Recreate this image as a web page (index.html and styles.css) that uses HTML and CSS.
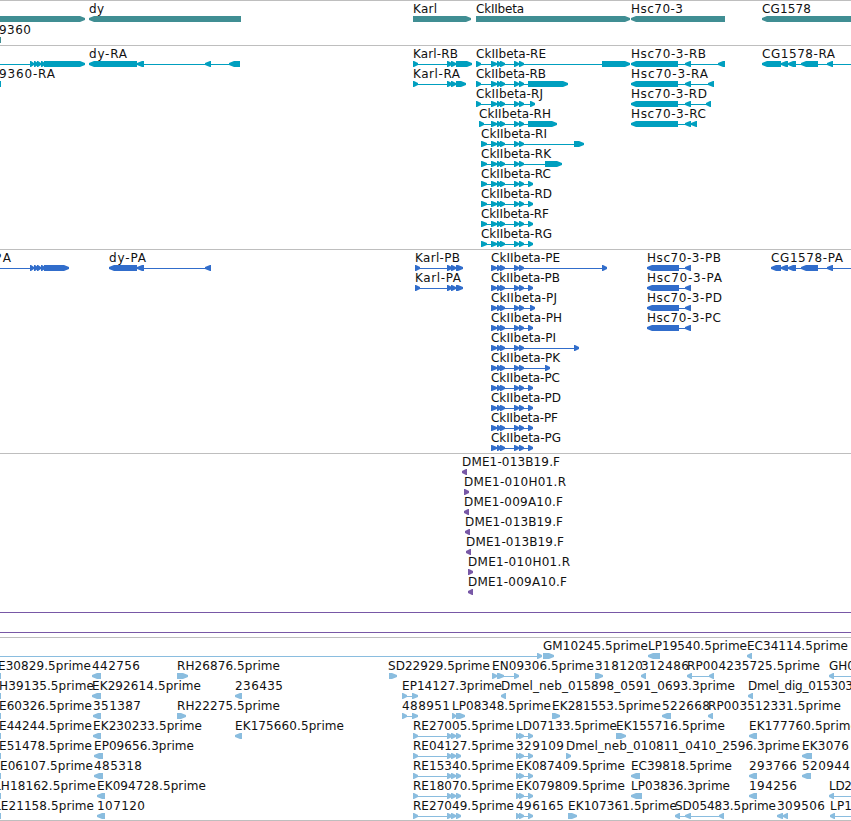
FILE: index.html
```html
<!DOCTYPE html>
<html lang="en">
<head>
    <meta charset="UTF-8">
    <meta name="viewport" content="width=device-width, initial-scale=1.0">
    <title>Genome Browser</title>
    <link rel="stylesheet" href="styles.css">
</head>
<body>
    <main class="browser">
        <section class="track track-genes"><svg id="genes"></svg></section>
        <section class="track track-mrna"><svg id="mrna"></svg></section>
        <section class="track track-protein"><svg id="protein"></svg></section>
        <section class="track track-clones"><svg id="clones"></svg></section>
        <section class="track track-est"><svg id="est"></svg></section>
    </main>
    <script src="tracks.js"></script>
</body>
</html>
```

FILE: styles.css
```css
* {
    margin: 0;
    padding: 0;
    box-sizing: border-box;
}

body {
    background-color: #ffffff;
    overflow: hidden;
}

.browser {
    width: 851px;
    display: flex;
    flex-direction: column;
}

.track {
    border-top: 1px solid #bebebe;
    overflow: hidden;
}

.track svg {
    display: block;
    width: 100%;
    height: 100%;
}

.track-genes {
    height: 45px;
    color: #408e93;
}

.track-mrna {
    height: 204px;
    color: #009fbf;
}

.track-protein {
    height: 204px;
    color: #316dcb;
}

.track-clones {
    height: 184px;
    color: #7858a6;
}

.track-est {
    height: 184px;
    border-bottom: 1px solid #bebebe;
    color: #8abddf;
}

.label {
    font-family: "DejaVu Sans", sans-serif;
    font-size: 12px;
    fill: #111111;
}

.exon,
.intron {
    fill: currentColor;
}

.intron {
    shape-rendering: crispEdges;
}
```

FILE: tracks.js
```js
var NS = 'http://www.w3.org/2000/svg';

function add(svg, tag, cls, attrs, text) {
    var el = document.createElementNS(NS, tag);
    el.setAttribute('class', cls);
    for (var key in attrs) el.setAttribute(key, attrs[key]);
    if (text) el.textContent = text;
    svg.appendChild(el);
}

// exon block, pointed on the side of its strand
function exon(svg, a, b, y, dir) {
    var t = Math.min(b - a, 6);
    var m = y + 3;
    var points;
    if (dir === '>') {
        points = [a, y, b - t + 1, y, b, m - 1, b, m + 1, b - t + 1, y + 6, a, y + 6];
    } else if (dir === '<') {
        points = [b, y, a + t - 1, y, a, m - 1, a, m + 1, a + t - 1, y + 6, b, y + 6];
    } else {
        points = [a, y, b, y, b, y + 6, a, y + 6];
    }
    add(svg, 'polygon', 'exon', { points: points.join(' ') });
}

// feature: [row, label, x, label width, strand, exons, line end]
function draw(id, pitch, features) {
    var svg = document.getElementById(id);
    features.forEach(function (f) {
        var y = 15 + f[0] * pitch;
        var exons = f[5].split(' ').map(function (s) {
            return s.split('-').map(Number);
        });
        var start = f[6] === 'from0' ? 0 : exons[0][0];
        var end = typeof f[6] === 'number' ? f[6] : exons[exons.length - 1][1];
        // a lone exon has no intron line
        if (exons.length > 1 || f[6]) {
            add(svg, 'rect', 'intron', { x: start, y: y + 3, width: end - start, height: 1 });
        }
        exons.forEach(function (e) {
            exon(svg, e[0], e[1], y, f[4]);
        });
        if (f[1]) {
            add(svg, 'text', 'label', { x: f[2], y: y - 3, textLength: f[3] }, f[1]);
        }
    });
}

var CK = '491-497 497-501 500-505 514-519 519-524 ';
var KARL = '413-418 447-452 451-456 ';
var RE = KARL + '456-461';
var LD = '516-520 519-524 528-533';
var CG = '781-788 788-796 801-818 827-833';

draw('genes', 21, [
    [0, '', 0, 0, '>', '0-85'],
    [1, '9360', -1, 32, '|', '0-1'],
    [0, 'dy', 89, 15, '<', '89-241'],
    [0, 'Karl', 413, 24, '>', '413-471'],
    [0, 'CkIIbeta', 476, 48, '>', '476-630'],
    [0, 'Hsc70-3', 631, 52, '<', '631-725'],
    [0, 'CG1578', 762, 49, '<', '762-860']
]);

draw('mrna', 20, [
    [0, '', 0, 0, '>', '30-34 34-38 37-41 41-45 44-85', 'from0'],
    [1, '9360-RA', -1, 56, '|', '0-1'],
    [0, 'dy-RA', 89, 38, '<', '89-137 137-144 205-211 229-240'],
    [0, 'Karl-RB', 413, 45, '>', KARL + '456-472'],
    [1, 'Karl-RA', 413, 47, '>', KARL + '456-466'],
    [0, 'CkIIbeta-RE', 476, 70, '>', '476-481 ' + CK + '602-630'],
    [1, 'CkIIbeta-RB', 476, 70, '>', '476-481 ' + CK + '528-568'],
    [2, 'CkIIbeta-RJ', 476, 67, '>', '476-481 ' + CK + '530-535'],
    [3, 'CkIIbeta-RH', 479, 72, '>', '479-484 ' + CK + '528-557'],
    [4, 'CkIIbeta-RI', 481, 66, '>', '481-487 ' + CK + '574-584'],
    [5, 'CkIIbeta-RK', 481, 70, '>', '481-487 ' + CK + '545-562'],
    [6, 'CkIIbeta-RC', 481, 70, '>', '481-487 ' + CK + '528-533'],
    [7, 'CkIIbeta-RD', 481, 71, '>', '481-487 ' + CK + '528-533'],
    [8, 'CkIIbeta-RF', 481, 68, '>', '481-487 ' + CK + '528-533'],
    [9, 'CkIIbeta-RG', 481, 71, '>', '481-487 ' + CK + '528-533'],
    [0, 'Hsc70-3-RB', 631, 75, '<', '631-678 685-691 718-725'],
    [1, 'Hsc70-3-RA', 631, 77, '<', '631-678 685-691 708-714'],
    [2, 'Hsc70-3-RD', 631, 76, '<', '631-678 685-691 706-711'],
    [3, 'Hsc70-3-RC', 631, 75, '<', '631-678 685-691 691-697'],
    [0, 'CG1578-RA', 762, 73, '<', '762-781 ' + CG, 860]
]);

draw('protein', 20, [
    [0, 'PA', -6, 17, '>', '30-34 34-38 37-41 41-45 44-69', 'from0'],
    [0, 'dy-PA', 109, 37, '<', '109-137 137-144 205-211'],
    [0, 'Karl-PB', 415, 45, '>', '415-420 447-452 451-456 456-463'],
    [1, 'Karl-PA', 415, 46, '>', '415-420 447-452 451-456 456-463'],
    [0, 'CkIIbeta-PE', 491, 69, '>', CK + '602-607'],
    [1, 'CkIIbeta-PB', 491, 69, '>', CK + '528-533'],
    [2, 'CkIIbeta-PJ', 491, 66, '>', CK + '530-535'],
    [3, 'CkIIbeta-PH', 491, 71, '>', CK + '528-533'],
    [4, 'CkIIbeta-PI', 491, 65, '>', CK + '574-579'],
    [5, 'CkIIbeta-PK', 491, 69, '>', CK + '545-550'],
    [6, 'CkIIbeta-PC', 491, 69, '>', CK + '528-533'],
    [7, 'CkIIbeta-PD', 491, 70, '>', CK + '528-533'],
    [8, 'CkIIbeta-PF', 491, 67, '>', CK + '528-533'],
    [9, 'CkIIbeta-PG', 491, 70, '>', CK + '528-533'],
    [0, 'Hsc70-3-PB', 647, 74, '<', '647-679 685-691'],
    [1, 'Hsc70-3-PA', 647, 75, '<', '647-679 685-691'],
    [2, 'Hsc70-3-PD', 647, 75, '<', '647-679 685-691'],
    [3, 'Hsc70-3-PC', 647, 74, '<', '647-679 685-691'],
    [0, 'CG1578-PA', 771, 72, '<', '771-781 ' + CG, 860]
]);

draw('clones', 20, [
    [0, 'DME1-013B19.F', 462, 98, '<', '462-467'],
    [1, 'DME1-010H01.R', 464, 102, '>', '464-469'],
    [2, 'DME1-009A10.F', 464, 99, '<', '464-469'],
    [3, 'DME1-013B19.F', 465, 98, '<', '465-470'],
    [4, 'DME1-013B19.F', 466, 98, '<', '466-471'],
    [5, 'DME1-010H01.R', 468, 102, '>', '468-473'],
    [6, 'DME1-009A10.F', 468, 99, '<', '468-473']
]);

// matches that span the whole view
[158, 178].forEach(function (y) {
    add(document.getElementById('clones'), 'rect', 'intron', { x: 0, y: y, width: 851, height: 1 });
});

draw('est', 20, [
    [0, '', 0, 0, '>', '537-542', 'from0'],
    [0, 'GM10245.5prime', 543, 105, '>', '543-554'],
    [0, 'LP19540.5prime', 648, 99, '<', '648-660'],
    [0, 'EC34114.5prime', 747, 101, '<', '747-752'],

    [1, 'E30829.5prime', -2, 93, '|', '0-1'],
    [1, '442756', 92, 48, '<', '92-101'],
    [1, 'RH26876.5prime', 177, 103, '>', '177-188'],
    [1, 'SD22929.5prime', 388, 102, '>', '389-397'],
    [1, 'EN09306.5prime', 492, 102, '>', '492-497 497-504 514-519'],
    [1, '318120', 595, 48, '>', '595-603'],
    [1, '312486', 641, 48, '<', '641-646'],
    [1, 'RP004235725.5prime', 687, 133, '<', '687-692 709-714'],
    [1, 'GH0', 829, 26, '<', '829-834', 860],

    [2, 'H39135.5prime', -1, 95, '|', '0-1'],
    [2, 'EK292614.5prime', 92, 109, '<', '92-101'],
    [2, '236435', 235, 48, '<', '235-242'],
    [2, 'EP14127.3prime', 402, 100, '>', '402-407 412-418'],
    [2, 'Dmel_neb_015898_0591_0693.3prime', 501, 234, '<', '501-506'],
    [2, 'Dmel_dig_015303', 748, 105, '<', '748-753'],

    [3, 'E60326.5prime', -1, 93, '|', '0-1'],
    [3, '351387', 93, 48, '<', '93-101'],
    [3, 'RH22275.5prime', 177, 103, '>', '177-186'],
    [3, '488951', 402, 48, '>', '402-407 412-418'],
    [3, 'LP08348.5prime', 452, 99, '>', '452-456 456-465'],
    [3, 'EK281553.5prime', 552, 109, '>', '552-560'],
    [3, '522668', 662, 48, '<', '662-671'],
    [3, 'RP003512331.5prime', 708, 133, '<', '708-713'],

    [4, 'E44244.5prime', -1, 93, '|', '0-1'],
    [4, 'EK230233.5prime', 93, 109, '<', '93-101'],
    [4, 'EK175660.5prime', 235, 109, '<', '235-242'],
    [4, 'RE27005.5prime', 413, 101, '>', RE],
    [4, 'LD07133.5prime', 516, 101, '>', LD],
    [4, 'EK155716.5prime', 616, 109, '>', '616-626'],
    [4, 'EK177760.5prime', 749, 109, '<', '749-757'],

    [5, 'E51478.5prime', -1, 93, '|', '0-1'],
    [5, 'EP09656.3prime', 94, 100, '<', '94-103'],
    [5, 'RE04127.5prime', 413, 101, '>', RE],
    [5, '329109', 516, 48, '>', LD],
    [5, 'Dmel_neb_010811_0410_2596.3prime', 566, 234, '>', '566-571'],
    [5, 'EK3076', 802, 47, '<', '802-812'],

    [6, 'E06107.5prime', 0, 93, '|', '0-1'],
    [6, '485318', 94, 48, '<', '94-103'],
    [6, 'RE15340.5prime', 413, 101, '>', RE],
    [6, 'EK087409.5prime', 516, 109, '>', LD],
    [6, 'EC39818.5prime', 631, 101, '<', '631-640'],
    [6, '293766', 749, 48, '<', '749-757'],
    [6, '520944', 802, 48, '<', '802-811'],

    [7, 'LH18162.5prime', -6, 102, '|', '0-1'],
    [7, 'EK094728.5prime', 97, 109, '<', '97-105'],
    [7, 'RE18070.5prime', 413, 101, '>', RE],
    [7, 'EK079809.5prime', 516, 109, '>', LD],
    [7, 'LP03836.3prime', 631, 99, '<', '631-642'],
    [7, '194256', 749, 48, '<', '749-757'],
    [7, 'LD2', 829, 23, '<', '829-834', 860],

    [8, 'LE21158.5prime', -6, 100, '|', '0-1'],
    [8, '107120', 97, 48, '<', '97-105'],
    [8, 'RE27049.5prime', 413, 101, '>', RE],
    [8, '496165', 516, 48, '>', LD],
    [8, 'EK107361.5prime', 568, 109, '>', '568-577'],
    [8, 'SD05483.5prime', 675, 101, '<', '675-680 685-691 719-724'],
    [8, '309506', 777, 48, '<', '777-783 783-788'],
    [8, 'LP1', 830, 22, '<', '830-835', 860]
]);
```
